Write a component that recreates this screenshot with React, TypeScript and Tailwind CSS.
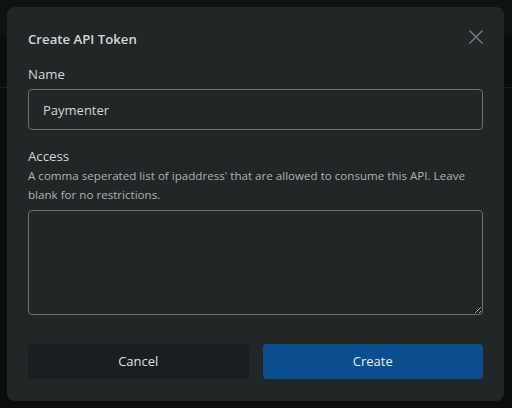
import { useState } from 'react'

function CloseIcon() {
  return (
    <svg width="16" height="16" viewBox="0 0 16 16" fill="none" stroke="currentColor" strokeWidth="1.4">
      <path d="M1.5 1.5 L14.5 14.5 M14.5 1.5 L1.5 14.5" />
    </svg>
  )
}

export default function App() {
  const [name, setName] = useState('Paymenter')
  const [access, setAccess] = useState('')

  return (
    <div
      className="relative w-[512px] h-[408px] overflow-hidden bg-[#0c0d0e]"
      style={{ fontFamily: '"Open Sans", "Noto Sans", sans-serif' }}
    >
      {/* page behind the backdrop */}
      <div className="h-[35px] bg-[#101213]" />
      <div className="h-[53px] border-b border-[#1c1f21] bg-[#0b0c0d]" />

      <div className="absolute left-[7px] top-[7px] w-[497px] h-[394px] rounded-lg bg-[#212627] px-[21px] pt-[22px] flex flex-col">
        <div className="flex items-center justify-between">
          <h2 className="text-[13.2px] leading-5 font-semibold text-[#d4d7d9]">Create API Token</h2>
          <button className="text-[#7d8285] -mr-[1px] mt-[-4px]">
            <CloseIcon />
          </button>
        </div>

        <label className="mt-[15px] text-[13.2px] leading-5 text-[#d4d7d9]">Name</label>
        <input
          value={name}
          onChange={e => setName(e.target.value)}
          className="mt-[5px] h-[41px] w-full rounded border border-[#6b7075] bg-transparent px-[14px] text-[13px] text-[#d4d7d9] outline-none"
        />

        <label className="mt-[16px] text-[13.2px] leading-5 text-[#d4d7d9]">Access</label>
        <p className="text-[11.6px] leading-[19px] text-[#aeb2b5]">
          A comma seperated list of ipaddress' that are allowed to consume this API. Leave blank for no restrictions.
        </p>
        <textarea
          value={access}
          onChange={e => setAccess(e.target.value)}
          className="mt-[6px] h-[105px] w-full rounded-sm border border-[#6b7075] bg-transparent px-3 py-2 text-[13px] text-[#d4d7d9] outline-none"
        />

        <div className="mt-[29px] grid grid-cols-2 gap-[14px]">
          <button className="h-[35px] rounded bg-[#1a1e20] text-[13px] text-[#dfe2e4]">Cancel</button>
          <button className="h-[35px] rounded bg-[#0c4f8f] text-[13px] text-[#e6ecf2]">Create</button>
        </div>
      </div>
    </div>
  )
}
